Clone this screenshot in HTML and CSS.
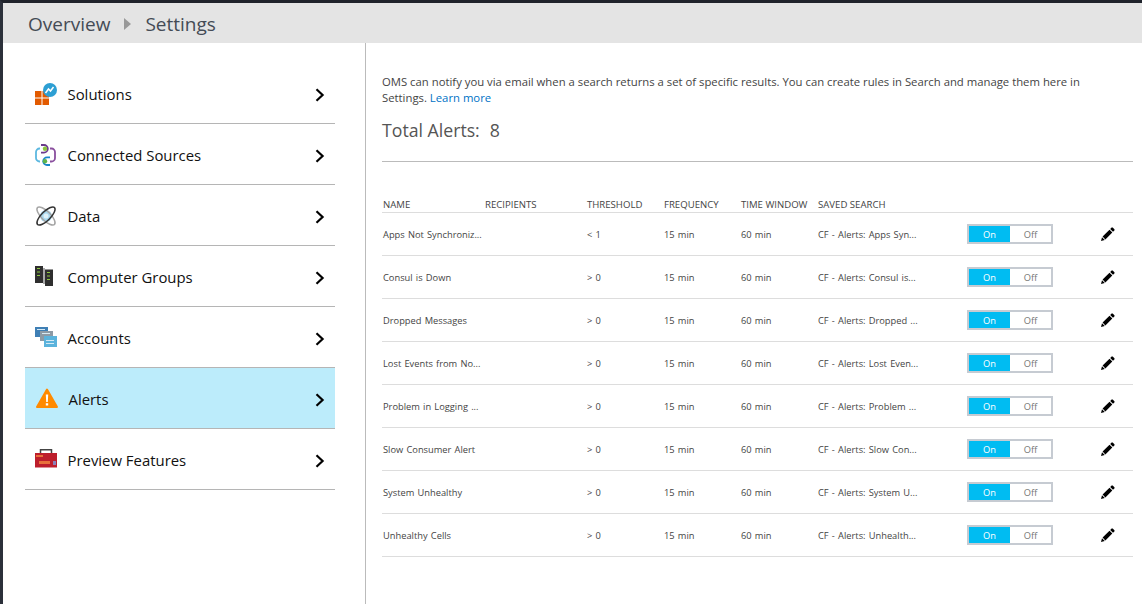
FILE: index.html
```html
<!DOCTYPE html>
<html lang="en">
<head>
    <meta charset="UTF-8">
    <title>Settings</title>
    <link rel="stylesheet" href="styles.css">
</head>
<body>
    <svg class="defs" width="0" height="0">
        <symbol id="pencil" viewBox="0 0 14 14">
            <path d="M10.600 .6q.6-.4 1.100 0l1.700 1.700q.4 .5 0 1.100l-1.400 1.400-2.800-2.800zM8.500 2.700l2.800 2.800-6.900 6.900-2.800-2.800zM1 10.200l2.800 2.800-3.800 1z"/>
        </symbol>
        <symbol id="chevron" viewBox="0 0 10 14">
            <path d="M1.500 1.200L7.600 7L1.500 12.800" fill="none" stroke="#000" stroke-width="2.200"/>
        </symbol>
    </svg>

    <div class="breadcrumb">
        <span>Overview</span>
        <span class="crumb-arrow"></span>
        <span>Settings</span>
    </div>

    <div class="main">
        <nav class="sidebar">
            <a class="nav-item">
                <svg class="nav-icon" viewBox="0 0 22 22">
                    <path fill="#e25a00" d="M0 8h6.500v6.500H0zM7.500 8H14v6.500H7.500zM0 15.500h6.500V22H0zM7.500 15.500H14V22H7.500z"/>
                    <circle cx="15" cy="7" r="7" fill="#2d9fd3"/>
                    <path d="M10.500 10l3-4 2 2 3-4" fill="none" stroke="#fff" stroke-width="1.500"/>
                </svg>
                <span class="nav-label">Solutions</span>
                <svg class="nav-chevron"><use href="#chevron"/></svg>
            </a>
            <a class="nav-item">
                <svg class="nav-icon" viewBox="0 0 22 22">
                    <path d="M5 4.500H4.500A3.500 3.500 0 0 0 1 8v6a3.500 3.500 0 0 0 3.500 3.500H5" fill="none" stroke="#5cb8e0" stroke-width="1.800"/>
                    <path d="M15 4.500h1.500A3.500 3.500 0 0 1 20 8v6a3.500 3.500 0 0 1-3.500 3.500H15" fill="none" stroke="#8a4f9e" stroke-width="1.800"/>
                    <path d="M6 1h3a3.800 3.800 0 0 1 0 7.600H6" fill="none" stroke="#6b3b8c" stroke-width="1.800"/>
                    <path d="M15 13.400h-3a3.800 3.800 0 0 0 0 7.600h3" fill="none" stroke="#1b87c9" stroke-width="1.800"/>
                    <circle cx="10" cy="4.800" r="2.200" fill="#8cc63f"/>
                    <circle cx="10" cy="17.200" r="2.200" fill="#5fb548"/>
                </svg>
                <span class="nav-label">Connected Sources</span>
                <svg class="nav-chevron"><use href="#chevron"/></svg>
            </a>
            <a class="nav-item">
                <svg class="nav-icon" viewBox="0 0 22 22">
                    <circle cx="11" cy="11" r="6" fill="#a8d8ef"/>
                    <circle cx="11" cy="11" r="2.500" fill="#dff2fa"/>
                    <ellipse cx="11" cy="11" rx="12" ry="4.500" transform="rotate(45 11 11)" fill="none" stroke="#a5a5a5" stroke-width="1.500"/>
                    <ellipse cx="11" cy="11" rx="12" ry="4.500" transform="rotate(-45 11 11)" fill="none" stroke="#333" stroke-width="1.500"/>
                </svg>
                <span class="nav-label">Data</span>
                <svg class="nav-chevron"><use href="#chevron"/></svg>
            </a>
            <a class="nav-item">
                <svg class="nav-icon" viewBox="0 0 22 22">
                    <path fill="#a8a8a8" d="M8 2h2v16H8z"/>
                    <path fill="#2f2f2f" d="M0 0h8v17H0zM10 3.500h8V20h-8z"/>
                    <path fill="#8cc63f" d="M2 2h3v1H2zM2 5.500h3v1H2zM2 9h3v1H2zM12 6h3v1h-3zM12 9.500h3v1h-3zM12 13h3v1h-3z"/>
                </svg>
                <span class="nav-label">Computer Groups</span>
                <svg class="nav-chevron"><use href="#chevron"/></svg>
            </a>
            <a class="nav-item">
                <svg class="nav-icon" viewBox="0 0 22 22">
                    <path fill="#3f7fb5" d="M0 0h13v10H0z"/>
                    <path fill="#8d9aa5" d="M5 4h13v10H5z"/>
                    <path fill="#5bb3dc" d="M9 9h13v11H9z"/>
                    <path fill="#d5eaf5" d="M2 2h8v1H2zM7 6h8v1H7zM11 13h8v1h-8zM11 16h8v1h-8z"/>
                </svg>
                <span class="nav-label">Accounts</span>
                <svg class="nav-chevron"><use href="#chevron"/></svg>
            </a>
            <a class="nav-item nav-item-active">
                <svg class="nav-icon" viewBox="0 0 22 22">
                    <path fill="#ff8a00" stroke="#ff8a00" stroke-width="2" stroke-linejoin="round" d="M11 1.500L21 19H1z"/>
                    <path fill="#fff" d="M9.800 6.500h2.400l-.4 7.500h-1.600zM9.800 15.200h2.400v2.300H9.800z"/>
                </svg>
                <span class="nav-label">Alerts</span>
                <svg class="nav-chevron"><use href="#chevron"/></svg>
            </a>
            <a class="nav-item">
                <svg class="nav-icon" viewBox="0 0 22 22">
                    <path d="M5.500 4.500V.8h11v3.700" fill="none" stroke="#444" stroke-width="1.500"/>
                    <path fill="#bd1e2c" d="M0 4h22v14.500H0z"/>
                    <path fill="#e8703a" d="M1 6h7v2H1zM4 12h11v3H4z"/>
                    <path fill="#8a7fb8" d="M18 12h3v4h-3z"/>
                </svg>
                <span class="nav-label">Preview Features</span>
                <svg class="nav-chevron"><use href="#chevron"/></svg>
            </a>
        </nav>

        <section class="content">
            <p class="intro">OMS can notify you via email when a search returns a set of specific results. You can create rules in Search and manage them here in Settings. <a class="link">Learn more</a></p>
            <div class="total"><span>Total Alerts:</span><span>8</span></div>

            <div class="table">
                <div class="row row-head">
                    <span>NAME</span><span>RECIPIENTS</span><span>THRESHOLD</span><span>FREQUENCY</span><span>TIME WINDOW</span><span>SAVED SEARCH</span>
                </div>
                <div class="row">
                    <span>Apps Not Synchroniz...</span><span></span><span>&lt; 1</span><span>15 min</span><span>60 min</span><span>CF - Alerts: Apps Syn...</span>
                    <div class="toggle"><span class="toggle-on">On</span><span class="toggle-off">Off</span></div>
                    <svg class="pencil"><use href="#pencil"/></svg>
                </div>
                <div class="row">
                    <span>Consul is Down</span><span></span><span>&gt; 0</span><span>15 min</span><span>60 min</span><span>CF - Alerts: Consul is...</span>
                    <div class="toggle"><span class="toggle-on">On</span><span class="toggle-off">Off</span></div>
                    <svg class="pencil"><use href="#pencil"/></svg>
                </div>
                <div class="row">
                    <span>Dropped Messages</span><span></span><span>&gt; 0</span><span>15 min</span><span>60 min</span><span>CF - Alerts: Dropped ...</span>
                    <div class="toggle"><span class="toggle-on">On</span><span class="toggle-off">Off</span></div>
                    <svg class="pencil"><use href="#pencil"/></svg>
                </div>
                <div class="row">
                    <span>Lost Events from No...</span><span></span><span>&gt; 0</span><span>15 min</span><span>60 min</span><span>CF - Alerts: Lost Even...</span>
                    <div class="toggle"><span class="toggle-on">On</span><span class="toggle-off">Off</span></div>
                    <svg class="pencil"><use href="#pencil"/></svg>
                </div>
                <div class="row">
                    <span>Problem in Logging ...</span><span></span><span>&gt; 0</span><span>15 min</span><span>60 min</span><span>CF - Alerts: Problem ...</span>
                    <div class="toggle"><span class="toggle-on">On</span><span class="toggle-off">Off</span></div>
                    <svg class="pencil"><use href="#pencil"/></svg>
                </div>
                <div class="row">
                    <span>Slow Consumer Alert</span><span></span><span>&gt; 0</span><span>15 min</span><span>60 min</span><span>CF - Alerts: Slow Con...</span>
                    <div class="toggle"><span class="toggle-on">On</span><span class="toggle-off">Off</span></div>
                    <svg class="pencil"><use href="#pencil"/></svg>
                </div>
                <div class="row">
                    <span>System Unhealthy</span><span></span><span>&gt; 0</span><span>15 min</span><span>60 min</span><span>CF - Alerts: System U...</span>
                    <div class="toggle"><span class="toggle-on">On</span><span class="toggle-off">Off</span></div>
                    <svg class="pencil"><use href="#pencil"/></svg>
                </div>
                <div class="row">
                    <span>Unhealthy Cells</span><span></span><span>&gt; 0</span><span>15 min</span><span>60 min</span><span>CF - Alerts: Unhealth...</span>
                    <div class="toggle"><span class="toggle-on">On</span><span class="toggle-off">Off</span></div>
                    <svg class="pencil"><use href="#pencil"/></svg>
                </div>
            </div>
        </section>
    </div>
</body>
</html>
```

FILE: styles.css
```css
html, body { height: 100%; }
body { margin: 0; height: 604px; box-sizing: border-box; overflow: hidden; background: #fff; border-top: 3px solid #1f232b; border-left: 3px solid #2b303a; font-family: "Open Sans", "Noto Sans", sans-serif; color: #222; }
.defs { display: block; height: 0; }

.breadcrumb { height: 38px; padding-top: 2px; background: #e4e4e4; display: flex; align-items: center; padding-left: 25px; font-size: 19px; color: #444b55; }
.crumb-arrow { width: 0; height: 0; margin: 0 14px; border-left: 7px solid #999; border-top: 6.500px solid transparent; border-bottom: 6.500px solid transparent; }

.main { display: flex; height: 561px; }
.sidebar { width: 363px; box-sizing: border-box; flex: none; border-right: 1px solid #bbb; padding: 20px 0 0 22px; }
.nav-item { width: 310px; height: 58px; padding-top: 2px; border-bottom: 1px solid #b5b5b5; display: flex; align-items: center; color: #111; }
.nav-item-active { background: #bcecfb; }
.nav-icon { width: 22px; height: 22px; margin: 0 10.500px 0 10px; flex: none; overflow: visible; }
.nav-item-active .nav-icon { margin: 0 10.500px 0 11px; }
.nav-label { flex: 1; font-size: 14.900px; }
.nav-chevron { width: 10px; height: 14px; margin: 2px 10px 0 0; }

.content { flex: 1; padding: 0 9px 0 16px; }
.intro { margin: 31px 0 0; font-size: 11.320px; line-height: 16px; color: #444; width: 720px; }
.link { color: #0072c6; }
.total { display: flex; gap: 10px; margin-top: 12px; font-size: 17.700px; line-height: 24px; color: #555; padding-bottom: 19px; border-bottom: 1px solid #bbb; }

.table { margin-top: 29px; }
.row { display: grid; grid-template-columns: 102px 102px 77px 77px 77px 149px 134px 1fr; align-items: center; height: 42px; border-bottom: 1px solid #ddd; padding-left: 1px; font-size: 9.300px; word-spacing: .8px; color: #444; white-space: nowrap; }
.row-head { height: 21px; align-items: end; font-size: 9.600px; word-spacing: 0; line-height: 14px; color: #444; }

.toggle { display: flex; width: 86px; height: 20px; box-sizing: border-box; border: 2px solid #c6cbd2; }
.toggle span { display: flex; align-items: center; justify-content: center; }
.toggle-on { width: 41px; background: #00bcf2; color: #fff; }
.toggle-off { flex: 1; color: #777; }
.pencil { width: 14px; height: 14px; margin-bottom: 1px; }
```
